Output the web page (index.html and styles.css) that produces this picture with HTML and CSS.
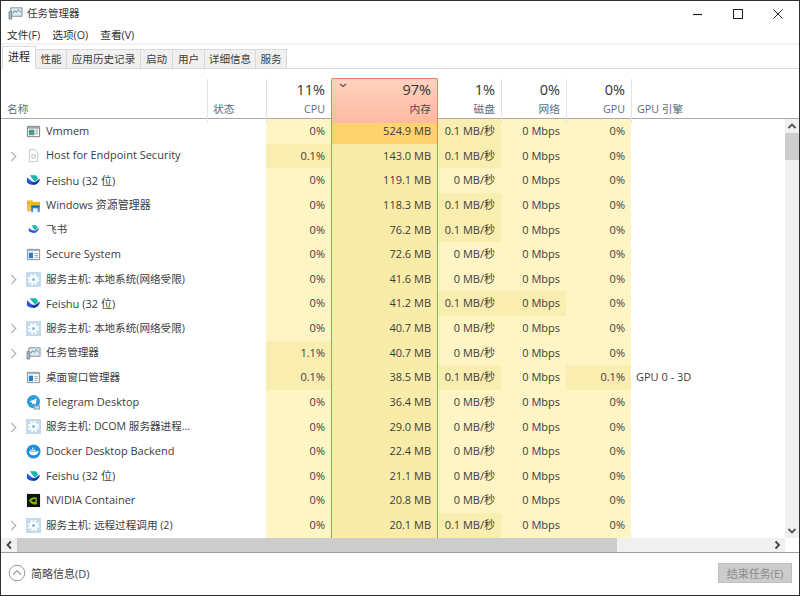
FILE: index.html
```html
<!DOCTYPE html>
<html lang="zh-CN">
<head>
<meta charset="utf-8">
<title>任务管理器</title>
<link rel="stylesheet" href="styles.css">
</head>
<body>
<svg class="defs" width="0" height="0" aria-hidden="true">
  <symbol id="i-tm" viewBox="0 0 16 16"><path d="M3 3h12v9H3z" fill="#dfe9ee" stroke="#7f8f98"/><path d="M5 9l2-3 2 2 2-3 3 3" fill="none" stroke="#3f8fb5"/><path d="M1 7h3v8H1z" fill="#a9b5bb" stroke="#66757d" stroke-width=".7"/></symbol>
  <symbol id="i-vm" viewBox="0 0 16 16"><path d="M1.500 2.500h13v11h-13z" fill="#fff" stroke="#6d7a80"/><path d="M2 3h12v2H2z" fill="#9aa7ad"/><path d="M3 6h6v6H3z" fill="#4f9a8c"/><path d="M10 6.500h3M10 8.500h3M10 10.500h3" stroke="#8fa0a8"/></symbol>
  <symbol id="i-host" viewBox="0 0 16 16"><path d="M3.500 1.500h6l3 3v10h-9z" fill="#fbfbfb" stroke="#c9c9c9"/><circle cx="8" cy="9" r="2" fill="none" stroke="#b4b4b4"/></symbol>
  <symbol id="i-fs" viewBox="0 0 16 16"><path d="M4 2.500h6.500c1.300 1 2 2.300 2.300 3.700L9.700 9C7.500 7 5.500 4.800 4 2.500z" fill="#17b8a6"/><path d="M6.500 9c2 .9 3.500.6 5-.7 1-1 2-2 3.500-2.300-.9 3-3 6.500-7 6.500-3 0-5.500-1-7-2.500V4.500C2.800 6 4.500 7.800 6.500 9z" fill="#2a55d8"/><path d="M8 12.500c3.500 0 5.500-2.500 6.500-5.200-1 .6-1.800 1.500-3 2.400-1 .8-2 1.100-3.200 1L6 10.500z" fill="#0d2f9c"/></symbol>
  <symbol id="i-fs2" viewBox="0 0 16 16"><path d="M6 3.500h4.500c1 .8 1.600 1.800 1.800 2.900L9.600 8.800C8 7.300 6.900 5.400 6 3.500z" fill="#17b8a6"/><path d="M7.300 8.900c1.500.6 2.800.4 4-.6.800-.8 1.600-1.500 2.700-1.800-.7 2.500-2.500 5.200-5.500 5.200-2.300 0-4.300-.8-5.500-2V6C4 7 5.500 8.200 7.300 8.900z" fill="#2a55d8"/></symbol>
  <symbol id="i-ex" viewBox="0 0 16 16"><path d="M1 2.500h5.500L8 4h7v10H1z" fill="#f5c04e"/><path d="M1 5h14v1.500H1z" fill="#e8a92f"/><path d="M5.500 8h9v7h-9z" fill="#3b8ec9"/><path d="M7.500 11h5v4h-5z" fill="#e9f2f8"/><path d="M5.500 8h9v2h-9z" fill="#1f6aa5"/></symbol>
  <symbol id="i-win" viewBox="0 0 16 16"><path d="M1.500 2.500h13v11h-13z" fill="#fff" stroke="#7c8a92"/><path d="M2 3h12v1.500H2z" fill="#aab5bb"/><path d="M3 6h4.500v6H3z" fill="#1f7fcf"/><path d="M9 7h4M9 9h4M9 11h4" stroke="#9aa7ad"/></symbol>
  <symbol id="i-gear" viewBox="0 0 16 16"><path d="M0 0h16v16H0z" fill="#c4dbed"/><circle cx="8" cy="8" r="4" fill="#fff"/><circle cx="8" cy="8" r="5" fill="none" stroke="#fff" stroke-width="2" stroke-dasharray="2.230 1.700"/><circle cx="8" cy="8" r="1.700" fill="#8db7d6"/></symbol>
  <symbol id="i-tg" viewBox="0 0 16 16"><circle cx="8" cy="7" r="7" fill="#2b9fdc"/><path d="M3.500 7l8-3.200-1.300 6.700-2.400-1.700-1.300 1.200-.3-2.200z" fill="#fff"/><path d="M8 11h7v4.500H8z" fill="#8a979e"/><path d="M9 12h5v2.500H9z" fill="#cfd6da"/></symbol>
  <symbol id="i-dk" viewBox="0 0 16 16"><circle cx="8" cy="8" r="7.500" fill="#1d8fe0"/><path d="M3 8h8.500c.6-.6 1.500-.7 2-.3-.4 2.700-2.500 4.300-5.500 4.300C5 12 3.500 10.500 3 8z" fill="#fff"/><path d="M4.500 6h1.500v1.500H4.500zM6.500 6H8v1.500H6.500zM8.500 6H10v1.500H8.500zM6.500 4H8v1.500H6.500z" fill="#fff"/></symbol>
  <symbol id="i-nv" viewBox="0 0 16 16"><path d="M1 1h14v14H1z" fill="#111"/><path d="M3 8c2-3 5-4 8.500-3v7C8 13 5 11.500 3 8z" fill="#76b900"/><path d="M5.500 8C7 6.500 8.500 6 10 6.500v3C8.500 10 7 9.500 5.500 8z" fill="#111"/></symbol>
</svg>
<main class="window">
  <header class="titlebar">
    <svg class="title-icon"><use href="#i-tm"/></svg>
    <span class="title-text">任务管理器</span>
    <div class="controls">
      <svg class="ctl" viewBox="0 0 40 18"><path d="M15 9.500h9" stroke="#222" stroke-width="1.200"/></svg>
      <svg class="ctl" viewBox="0 0 40 18"><path d="M15.500 4.500h9v9h-9z" fill="none" stroke="#222" stroke-width="1.100"/></svg>
      <svg class="ctl" viewBox="0 0 40 18"><path d="M15.500 4.500l9 9M24.500 4.500l-9 9" fill="none" stroke="#222"/></svg>
    </div>
  </header>
  <nav class="menu"><span>文件(F)</span><span>选项(O)</span><span>查看(V)</span></nav>
  <div class="tabs">
    <span class="tab active">进程</span><span class="tab w31">性能</span><span class="tab w74">应用历史记录</span><span class="tab w32">启动</span><span class="tab w32">用户</span><span class="tab w51">详细信息</span><span class="tab w31">服务</span>
  </div>
  <div class="thead cols">
    <div class="th left"><span class="label">名称</span></div>
    <div class="th left div"><span class="label">状态</span></div>
    <div class="th div"><span class="pct">11%</span><span class="label">CPU</span></div>
    <div class="th memh"><svg class="sort" viewBox="0 0 8 5"><path d="M1 1l3 2.500L7 1" fill="none" stroke="#555" stroke-width="1.200"/></svg><span class="pct">97%</span><span class="label dark">内存</span></div>
    <div class="th"><span class="pct">1%</span><span class="label">磁盘</span></div>
    <div class="th div"><span class="pct">0%</span><span class="label">网络</span></div>
    <div class="th div"><span class="pct">0%</span><span class="label">GPU</span></div>
    <div class="th left div"><span class="label">GPU 引擎</span></div>
  </div>
  <div class="content">
    <div class="list">
      <div class="row cols"><div class="name"><i class="chev"></i><svg class="ic"><use href="#i-vm"/></svg><span>Vmmem</span></div><div></div><div class="v">0%</div><div class="v mem hot">524.9 MB</div><div class="v h1">0.1 MB/秒</div><div class="v">0 Mbps</div><div class="v">0%</div><div class="eng"></div></div>
      <div class="row cols"><div class="name"><i class="chev on"></i><svg class="ic"><use href="#i-host"/></svg><span>Host for Endpoint Security</span></div><div></div><div class="v h1">0.1%</div><div class="v mem">143.0 MB</div><div class="v h1">0.1 MB/秒</div><div class="v">0 Mbps</div><div class="v">0%</div><div class="eng"></div></div>
      <div class="row cols"><div class="name"><i class="chev"></i><svg class="ic"><use href="#i-fs"/></svg><span>Feishu (32 位)</span></div><div></div><div class="v">0%</div><div class="v mem">119.1 MB</div><div class="v">0 MB/秒</div><div class="v">0 Mbps</div><div class="v">0%</div><div class="eng"></div></div>
      <div class="row cols"><div class="name"><i class="chev"></i><svg class="ic"><use href="#i-ex"/></svg><span>Windows 资源管理器</span></div><div></div><div class="v">0%</div><div class="v mem">118.3 MB</div><div class="v h1">0.1 MB/秒</div><div class="v">0 Mbps</div><div class="v">0%</div><div class="eng"></div></div>
      <div class="row cols"><div class="name"><i class="chev"></i><svg class="ic"><use href="#i-fs2"/></svg><span class="cj">飞书</span></div><div></div><div class="v">0%</div><div class="v mem">76.2 MB</div><div class="v h1">0.1 MB/秒</div><div class="v">0 Mbps</div><div class="v">0%</div><div class="eng"></div></div>
      <div class="row cols"><div class="name"><i class="chev"></i><svg class="ic"><use href="#i-win"/></svg><span>Secure System</span></div><div></div><div class="v">0%</div><div class="v mem">72.6 MB</div><div class="v">0 MB/秒</div><div class="v">0 Mbps</div><div class="v">0%</div><div class="eng"></div></div>
      <div class="row cols"><div class="name"><i class="chev on"></i><svg class="ic"><use href="#i-gear"/></svg><span class="cj">服务主机: 本地系统(网络受限)</span></div><div></div><div class="v">0%</div><div class="v mem">41.6 MB</div><div class="v">0 MB/秒</div><div class="v">0 Mbps</div><div class="v">0%</div><div class="eng"></div></div>
      <div class="row cols"><div class="name"><i class="chev"></i><svg class="ic"><use href="#i-fs"/></svg><span>Feishu (32 位)</span></div><div></div><div class="v">0%</div><div class="v mem">41.2 MB</div><div class="v h1">0.1 MB/秒</div><div class="v h1">0 Mbps</div><div class="v">0%</div><div class="eng"></div></div>
      <div class="row cols"><div class="name"><i class="chev on"></i><svg class="ic"><use href="#i-gear"/></svg><span class="cj">服务主机: 本地系统(网络受限)</span></div><div></div><div class="v">0%</div><div class="v mem">40.7 MB</div><div class="v">0 MB/秒</div><div class="v">0 Mbps</div><div class="v">0%</div><div class="eng"></div></div>
      <div class="row cols"><div class="name"><i class="chev on"></i><svg class="ic"><use href="#i-tm"/></svg><span class="cj">任务管理器</span></div><div></div><div class="v h1">1.1%</div><div class="v mem">40.7 MB</div><div class="v">0 MB/秒</div><div class="v">0 Mbps</div><div class="v">0%</div><div class="eng"></div></div>
      <div class="row cols"><div class="name"><i class="chev"></i><svg class="ic"><use href="#i-win"/></svg><span class="cj">桌面窗口管理器</span></div><div></div><div class="v h1">0.1%</div><div class="v mem">38.5 MB</div><div class="v h1">0.1 MB/秒</div><div class="v">0 Mbps</div><div class="v h1">0.1%</div><div class="eng">GPU 0 - 3D</div></div>
      <div class="row cols"><div class="name"><i class="chev"></i><svg class="ic"><use href="#i-tg"/></svg><span>Telegram Desktop</span></div><div></div><div class="v">0%</div><div class="v mem">36.4 MB</div><div class="v">0 MB/秒</div><div class="v">0 Mbps</div><div class="v">0%</div><div class="eng"></div></div>
      <div class="row cols"><div class="name"><i class="chev on"></i><svg class="ic"><use href="#i-gear"/></svg><span class="cj">服务主机: DCOM 服务器进程...</span></div><div></div><div class="v">0%</div><div class="v mem">29.0 MB</div><div class="v">0 MB/秒</div><div class="v">0 Mbps</div><div class="v">0%</div><div class="eng"></div></div>
      <div class="row cols"><div class="name"><i class="chev"></i><svg class="ic"><use href="#i-dk"/></svg><span>Docker Desktop Backend</span></div><div></div><div class="v">0%</div><div class="v mem">22.4 MB</div><div class="v">0 MB/秒</div><div class="v">0 Mbps</div><div class="v">0%</div><div class="eng"></div></div>
      <div class="row cols"><div class="name"><i class="chev"></i><svg class="ic"><use href="#i-fs"/></svg><span>Feishu (32 位)</span></div><div></div><div class="v">0%</div><div class="v mem">21.1 MB</div><div class="v">0 MB/秒</div><div class="v">0 Mbps</div><div class="v">0%</div><div class="eng"></div></div>
      <div class="row cols"><div class="name"><i class="chev"></i><svg class="ic"><use href="#i-nv"/></svg><span>NVIDIA Container</span></div><div></div><div class="v">0%</div><div class="v mem">20.8 MB</div><div class="v">0 MB/秒</div><div class="v">0 Mbps</div><div class="v">0%</div><div class="eng"></div></div>
      <div class="row cols"><div class="name"><i class="chev on"></i><svg class="ic"><use href="#i-gear"/></svg><span class="cj">服务主机: 远程过程调用 (2)</span></div><div></div><div class="v">0%</div><div class="v mem">20.1 MB</div><div class="v h1">0.1 MB/秒</div><div class="v">0 Mbps</div><div class="v">0%</div><div class="eng"></div></div>
    </div>
    <div class="vscroll">
      <svg class="arrow-v" viewBox="0 0 14 14"><path d="M3.500 9L7 5.500 10.500 9" fill="none" stroke="#555" stroke-width="1.800"/></svg>
      <div class="vthumb"></div>
      <div class="vtrack"></div>
      <svg class="arrow-v" viewBox="0 0 14 14"><path d="M3.500 5L7 8.500 10.500 5" fill="none" stroke="#555" stroke-width="1.800"/></svg>
    </div>
  </div>
  <div class="hscroll">
    <svg class="arrow-h" viewBox="0 0 16 14"><path d="M10 3.500L6.500 7l3.500 3.500" fill="none" stroke="#444" stroke-width="1.800"/></svg>
    <div class="hthumb"></div>
    <div class="htrack"></div>
    <svg class="arrow-h" viewBox="0 0 16 14"><path d="M6.500 3.500L10 7l-3.500 3.500" fill="none" stroke="#444" stroke-width="1.800"/></svg>
    <div class="corner"></div>
  </div>
  <footer class="footer">
    <svg class="collapse" viewBox="0 0 18 18"><circle cx="9" cy="9" r="7.800" fill="#fff" stroke="#999"/><path d="M5 10.500L9 6.800l4 3.700" fill="none" stroke="#999" stroke-width="1.100"/></svg>
    <span class="less">简略信息(D)</span>
    <button class="end" type="button" disabled>结束任务(E)</button>
  </footer>
</main>
</body>
</html>
```

FILE: styles.css
```css
* { box-sizing: border-box; }
html, body { margin: 0; padding: 0; background: #fff; }
body {
  width: 800px;
  height: 596px;
  overflow: hidden;
  font-family: "Open Sans", "Noto Sans CJK SC", sans-serif;
  font-size: 11px;
  color: #3a3a3a;
}
.defs { position: absolute; }
.window {
  width: 800px;
  height: 596px;
  border: 1px solid #2e2e2e;
  display: flex;
  flex-direction: column;
  background: #fff;
}
.titlebar { height: 25px; display: flex; align-items: center; padding: 0 0 2px 7px; flex: none; }
.title-icon { width: 15px; height: 15px; margin-right: 4px; }
.title-text { font-size: 10.500px; color: #333; }
.controls { margin-left: auto; display: flex; margin-right: 1px; padding-top: 2px; }
.ctl { width: 40px; height: 18px; display: block; }
.menu {
  height: 19px;
  flex: none;
  display: flex;
  gap: 12px;
  padding: 0 0 0 6px;
  align-items: center;
  border-bottom: 2px solid #f3f3f3;
  color: #333;
  font-size: 10.700px;
}
.tabs {
  height: 24px;
  flex: none;
  display: flex;
  align-items: flex-end;
  padding-left: 1px;
  border-bottom: 1px solid #d9d9d9;
  font-size: 10.600px;
}
.tab {
  height: 20px;
  width: 31px;
  margin-bottom: -1px;
  background: #f0f0f0;
  border: 1px solid #d9d9d9;
  border-left: 0;
  text-align: center;
  line-height: 18px;
  color: #3d3d3d;
  white-space: nowrap;
}
.tab.active {
  height: 23px;
  width: 34px;
  background: #fff;
  border: 1px solid #d9d9d9;
  border-bottom-color: #fff;
  line-height: 20px;
  color: #222;
  font-size: 11px;
}
.tab.w32 { width: 32px; }
.tab.w51 { width: 51px; }
.tab.w74 { width: 74px; }
.cols {
  display: grid;
  grid-template-columns: 206px 59px 65px 107px 63px 65px 65px 1fr;
}
.thead { height: 50px; flex: none; border-bottom: 1px solid #a8a8a8; }
.th {
  margin-top: 10px;
  display: flex;
  flex-direction: column;
  align-items: flex-end;
  justify-content: flex-end;
  padding: 0 6px 5px;
  position: relative;
}
.th.left { align-items: flex-start; }
.th.div { border-left: 1px solid #e2e2e2; }
.th.left:first-child { padding-left: 6px; }
.th.left.div { padding-left: 5px; }
.pct { font-size: 14.500px; line-height: 22px; color: #333; }
.label { font-size: 10.700px; line-height: 17px; color: #5a6d82; }
.label.dark { color: #4a4a4a; }
.memh {
  margin-top: 9px;
  background: linear-gradient(#ffd2c0, #ffb9a0);
  border: 1px solid #e9824f;
  border-bottom: 0;
  border-radius: 2px 2px 0 0;
  padding-right: 6px;
}
.sort { position: absolute; left: 7px; top: 4px; width: 8px; height: 5px; }
.content { height: 419px; flex: none; display: flex; }
.list { width: 784px; flex: none; overflow: hidden; }
.row { height: 24.625px; }
.name { display: flex; align-items: center; white-space: nowrap; color: #3c3c3c; }
.name span { padding-bottom: 2px; }
.name .cj { font-size: 10.600px; }
.chev { width: 25px; flex: none; height: 10px; position: relative; }
.chev.on::before {
  content: "";
  position: absolute;
  left: 7px;
  top: 2px;
  width: 6px;
  height: 6px;
  border-top: 1.300px solid #a6a6a6;
  border-right: 1.300px solid #a6a6a6;
  transform: rotate(45deg);
}
.ic { width: 15px; height: 15px; flex: none; margin-right: 5px; }
.v {
  background: #fff4c4;
  text-align: right;
  padding-right: 6px;
  line-height: 24.625px;
  white-space: nowrap;
  color: #3c3c3c;
}
.v.h1 { background: #f9edb0; }
.v.mem {
  background: #f9eca8;
  border-left: 1px solid #e9824f;
  border-right: 1px solid #e9824f;
}
.v.mem.hot { background: #fcd36e; }
.eng { padding-left: 5px; line-height: 24.625px; white-space: nowrap; color: #3c3c3c; }
.vscroll { width: 14px; flex: none; display: flex; flex-direction: column; background: #f0f0f0; }
.arrow-v { width: 14px; height: 14px; flex: none; display: block; }
.vthumb { height: 27px; flex: none; background: #cdcdcd; }
.vtrack { flex: 1; }
.hscroll { height: 14px; flex: none; display: flex; background: #f0f0f0; }
.arrow-h { width: 16px; height: 14px; flex: none; display: block; }
.hthumb { width: 600px; flex: none; background: #cdcdcd; }
.htrack { flex: 1; }
.corner { width: 14px; flex: none; background: #fff; }
.footer {
  flex: 1;
  display: flex;
  align-items: center;
  border-top: 1px solid #a0a0a0;
  padding: 0 7px 3px 7px;
}
.collapse { width: 18px; height: 18px; margin-right: 5px; }
.less { color: #444; }
.end {
  margin-left: auto;
  width: 74px;
  height: 20px;
  padding: 0;
  background: #cccccc;
  border: 1px solid #bfbfbf;
  color: #8a8a8a;
  font: inherit;
}
```
